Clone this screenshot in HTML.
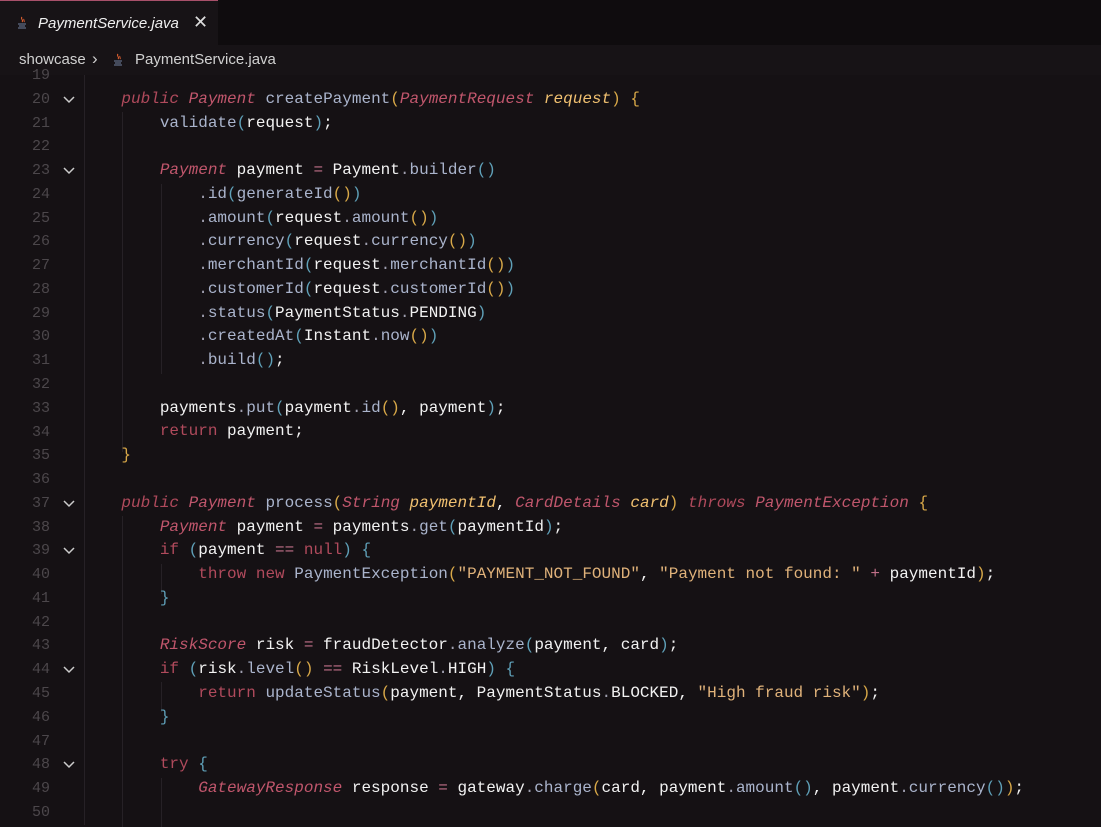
<!DOCTYPE html><html><head><meta charset="utf-8"><style>
body{margin:0;width:1101px;height:825px;overflow:hidden;background:#151114;font-family:"Liberation Mono",monospace;position:relative}
.tabbar{position:absolute;left:0;top:0;width:1101px;height:45px;background:#0f0c0e;}
.tab{position:absolute;left:0;top:0;width:218px;height:45px;background:#171316;border-top:1px solid #a8506a;box-sizing:border-box;}
.tab span{position:absolute;left:38px;top:14px;font:italic 15px "Liberation Sans",sans-serif;color:#f0f0f0;}
.tab .x{position:absolute;left:193px;top:11px;font:18px "Liberation Sans",sans-serif;color:#ddd;font-style:normal}
.crumb{position:absolute;left:0;top:45px;width:1101px;height:30px;background:#171316;font:15px "Liberation Sans",sans-serif;color:#d0d0d0;}
.ic{position:absolute;width:12px;height:14px;}
.gutter{position:absolute;left:0;top:64px;width:84px;}
.ln{position:absolute;left:0;width:50px;text-align:right;color:#4c474b;font-size:15px;}
.chev{position:absolute;left:63px;width:12px;height:8px;}
.code{position:absolute;left:83px;top:64px;font-size:16px;color:#f2f2f2;}
.l{height:23.77px;line-height:23.77px;white-space:pre;}
.g{position:absolute;top:75px;width:1px;background:#262126;}
.k{color:#b04a5c}.t{color:#c0566c;font-style:italic}.m{color:#aab4cc}.p{color:#d8a848}.s{color:#e0b27a}.a{color:#f0c070;font-style:italic}.b{color:#5fa0b8}.o{color:#c07088}.d{color:#a0a0b0}
</style></head><body>
<div class="tabbar"><div class="tab">
<svg class="ic" style="left:16px;top:15px" viewBox="0 0 12 14"><path d="M6 1c-2 2 2 3 0 5M8 3c-1 1 1 2 0 3" stroke="#e06030" fill="none"/><path d="M2 8h8M3 10h6M2 12h8" stroke="#7080a0" fill="none"/></svg>
<span>PaymentService.java</span><span class="x">✕</span></div></div>
<div class="crumb"><span style="position:absolute;left:19px;top:6px">showcase</span><span style="position:absolute;left:92px;top:4px;font-size:17px">›</span>
<svg class="ic" style="left:112px;top:8px" viewBox="0 0 12 14"><path d="M6 1c-2 2 2 3 0 5M8 3c-1 1 1 2 0 3" stroke="#e06030" fill="none"/><path d="M2 8h8M3 10h6M2 12h8" stroke="#7080a0" fill="none"/></svg>
<span style="position:absolute;left:135px;top:6px">PaymentService.java</span></div>
<div class="g" style="left:84px;height:750px"></div>
<div class="g" style="left:122px;top:112px;height:340px"></div>
<div class="g" style="left:161px;top:184px;height:190px"></div>
<div class="g" style="left:122px;top:516px;height:311px"></div>
<div class="g" style="left:161px;top:564px;height:30px"></div>
<div class="g" style="left:161px;top:682px;height:30px"></div>
<div class="g" style="left:161px;top:778px;height:49px"></div>
<div class="gutter" id="gut"></div>
<div class="code"><div class="l"> </div><div class="l">    <span class="k" style="font-style:italic">public</span> <span class="t">Payment</span> <span class="m">createPayment</span><span class="p">(</span><span class="t">PaymentRequest</span> <span class="a">request</span><span class="p">)</span> <span class="p">{</span></div><div class="l">        <span class="m">validate</span><span class="b">(</span>request<span class="b">)</span>;</div><div class="l"> </div><div class="l">        <span class="t">Payment</span> payment <span class="o">=</span> Payment<span class="d">.</span><span class="m">builder</span><span class="b">()</span></div><div class="l">            <span class="d">.</span><span class="m">id</span><span class="b">(</span><span class="m">generateId</span><span class="p">()</span><span class="b">)</span></div><div class="l">            <span class="d">.</span><span class="m">amount</span><span class="b">(</span>request<span class="d">.</span><span class="m">amount</span><span class="p">()</span><span class="b">)</span></div><div class="l">            <span class="d">.</span><span class="m">currency</span><span class="b">(</span>request<span class="d">.</span><span class="m">currency</span><span class="p">()</span><span class="b">)</span></div><div class="l">            <span class="d">.</span><span class="m">merchantId</span><span class="b">(</span>request<span class="d">.</span><span class="m">merchantId</span><span class="p">()</span><span class="b">)</span></div><div class="l">            <span class="d">.</span><span class="m">customerId</span><span class="b">(</span>request<span class="d">.</span><span class="m">customerId</span><span class="p">()</span><span class="b">)</span></div><div class="l">            <span class="d">.</span><span class="m">status</span><span class="b">(</span>PaymentStatus<span class="d">.</span>PENDING<span class="b">)</span></div><div class="l">            <span class="d">.</span><span class="m">createdAt</span><span class="b">(</span>Instant<span class="d">.</span><span class="m">now</span><span class="p">()</span><span class="b">)</span></div><div class="l">            <span class="d">.</span><span class="m">build</span><span class="b">()</span>;</div><div class="l"> </div><div class="l">        payments<span class="d">.</span><span class="m">put</span><span class="b">(</span>payment<span class="d">.</span><span class="m">id</span><span class="p">()</span>, payment<span class="b">)</span>;</div><div class="l">        <span class="k">return</span> payment;</div><div class="l">    <span class="p">}</span></div><div class="l"> </div><div class="l">    <span class="k" style="font-style:italic">public</span> <span class="t">Payment</span> <span class="m">process</span><span class="p">(</span><span class="t">String</span> <span class="a">paymentId</span>, <span class="t">CardDetails</span> <span class="a">card</span><span class="p">)</span> <span class="k" style="font-style:italic">throws</span> <span class="t">PaymentException</span> <span class="p">{</span></div><div class="l">        <span class="t">Payment</span> payment <span class="o">=</span> payments<span class="d">.</span><span class="m">get</span><span class="b">(</span>paymentId<span class="b">)</span>;</div><div class="l">        <span class="k">if</span> <span class="b">(</span>payment <span class="o">==</span> <span class="k">null</span><span class="b">)</span> <span class="b">{</span></div><div class="l">            <span class="k">throw</span> <span class="k">new</span> <span class="m">PaymentException</span><span class="p">(</span><span class="s">"PAYMENT_NOT_FOUND"</span>, <span class="s">"Payment not found: "</span> <span class="o">+</span> paymentId<span class="p">)</span>;</div><div class="l">        <span class="b">}</span></div><div class="l"> </div><div class="l">        <span class="t">RiskScore</span> risk <span class="o">=</span> fraudDetector<span class="d">.</span><span class="m">analyze</span><span class="b">(</span>payment, card<span class="b">)</span>;</div><div class="l">        <span class="k">if</span> <span class="b">(</span>risk<span class="d">.</span><span class="m">level</span><span class="p">()</span> <span class="o">==</span> RiskLevel<span class="d">.</span>HIGH<span class="b">)</span> <span class="b">{</span></div><div class="l">            <span class="k">return</span> <span class="m">updateStatus</span><span class="p">(</span>payment, PaymentStatus<span class="d">.</span>BLOCKED, <span class="s">"High fraud risk"</span><span class="p">)</span>;</div><div class="l">        <span class="b">}</span></div><div class="l"> </div><div class="l">        <span class="k">try</span> <span class="b">{</span></div><div class="l">            <span class="t">GatewayResponse</span> response <span class="o">=</span> gateway<span class="d">.</span><span class="m">charge</span><span class="p">(</span>card, payment<span class="d">.</span><span class="m">amount</span><span class="b">()</span>, payment<span class="d">.</span><span class="m">currency</span><span class="b">()</span><span class="p">)</span>;</div><div class="l"> </div></div>
<script>
var g=document.getElementById('gut'),h='';var folds=[20,23,37,39,44,48];
for(var i=19;i<=50;i++){var y=(i-19)*23.77;h+='<div class="ln" style="top:'+y+'px;line-height:23.77px">'+i+'</div>';
if(folds.indexOf(i)>=0)h+='<svg class="chev" style="top:'+(y+8)+'px" viewBox="0 0 12 8"><path d="M1 1l5 5 5-5" stroke="#ccc" stroke-width="1.5" fill="none"/></svg>';}
g.innerHTML=h;
</script>
</body></html>
